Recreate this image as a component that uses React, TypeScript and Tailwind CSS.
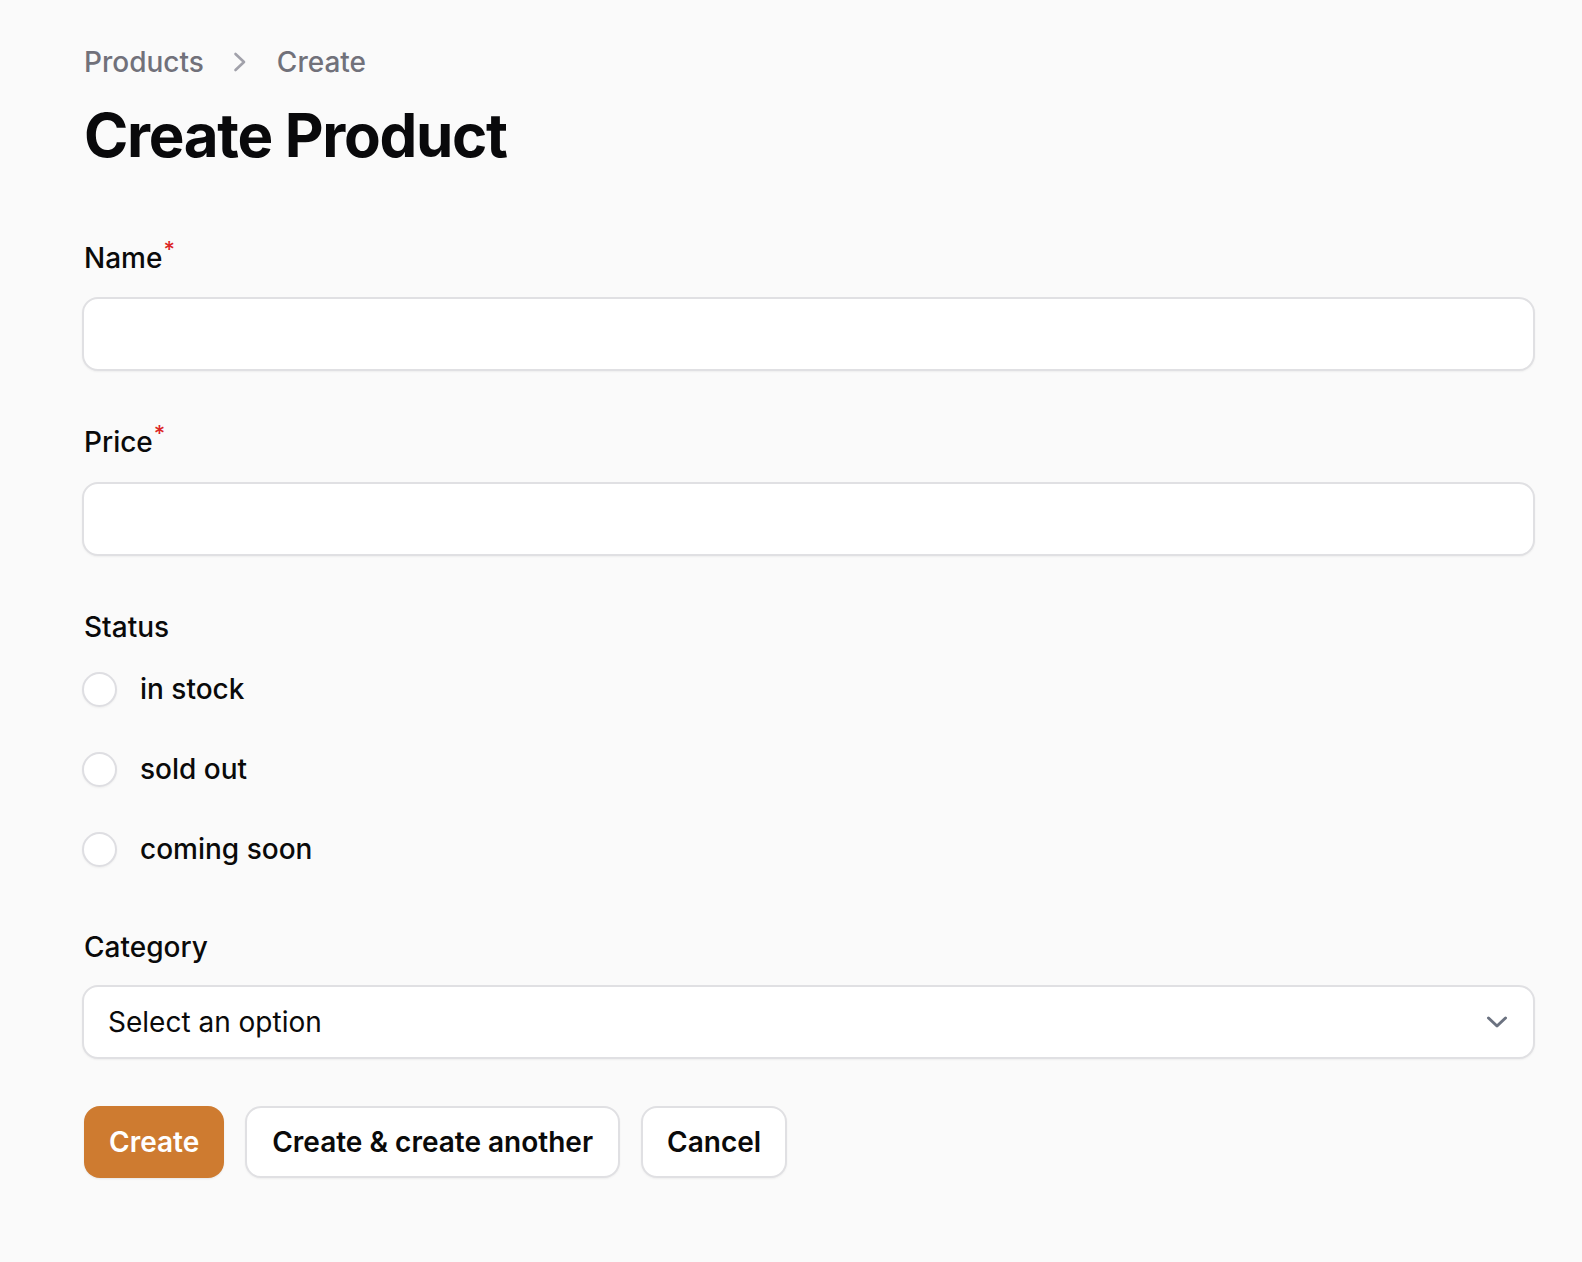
import React from "react";

const font = { fontFamily: "Inter, 'Noto Sans', sans-serif" };

function Label({ text, required }: { text: string; required?: boolean }) {
  return (
    <div className="h-[40px] flex items-center pl-[2px] text-[28px] leading-[40px] font-medium text-[#0a0a0a]">
      <span>
        {text}
        {required && (
          <span className="text-[#dc2626] font-medium text-[22px] leading-none relative top-[-11px] ml-[1px]">*</span>
        )}
      </span>
    </div>
  );
}

function Box({ children }: { children?: React.ReactNode }) {
  return (
    <div className="h-[74px] w-full rounded-[16px] border-2 border-[#e0e0e3] bg-white shadow-[0_1px_2px_rgba(0,0,0,0.05)] flex items-center justify-between pl-[24px] pr-[25px]">
      {children}
    </div>
  );
}

function Radio({ label }: { label: string }) {
  return (
    <div className="h-[48px] flex items-center">
      <div className="w-[35px] h-[35px] rounded-full border-2 border-[#dedee2] bg-white shadow-[0_1px_2px_rgba(0,0,0,0.05)]" />
      <span className="ml-[23px] text-[28px] leading-[40px] font-medium text-[#0a0a0a]">{label}</span>
    </div>
  );
}

export default function App() {
  return (
    <div className="min-h-screen w-full bg-[#fafafa]" style={font}>
      <div className="pl-[82px] pr-[47px] pt-[42px] pb-[60px]">
        <nav className="flex items-center h-[40px] pl-[2px] text-[28px] leading-[40px] font-medium text-[#71717a]">
          <span>Products</span>
          <svg className="ml-[29px] mr-[29px]" width="15" height="22" viewBox="0 0 15 22" fill="none">
            <path d="M2.5 3 L11 11 L2.5 19" stroke="#a1a1aa" strokeWidth="2.6" strokeLinecap="round" strokeLinejoin="round" />
          </svg>
          <span>Create</span>
        </nav>
        <h1 className="mt-[17px] pl-[2px] text-[60px] leading-[72px] font-bold tracking-[-1.3px] text-[#09090b]">
          Create Product
        </h1>

        <div className="mt-[67px]">
          <Label text="Name" required />
        </div>
        <div className="mt-[19px]">
          <Box />
        </div>

        <div className="mt-[51px]">
          <Label text="Price" required />
        </div>
        <div className="mt-[20px]">
          <Box />
        </div>

        <div className="mt-[51px]">
          <Label text="Status" />
        </div>
        <div className="mt-[18px] flex flex-col gap-[32px]">
          <Radio label="in stock" />
          <Radio label="sold out" />
          <Radio label="coming soon" />
        </div>

        <div className="mt-[54px]">
          <Label text="Category" />
        </div>
        <div className="mt-[18px]">
          <Box>
            <span className="text-[28px] leading-[40px] text-[#0a0a0a]">Select an option</span>
            <svg width="22" height="14" viewBox="0 0 22 14" fill="none">
              <path d="M2.5 3 L11 11 L19.5 3" stroke="#6b7280" strokeWidth="3" strokeLinecap="round" strokeLinejoin="round" />
            </svg>
          </Box>
        </div>

        <div className="mt-[47px] flex items-center gap-[21px] pl-[2px]">
          <button className="h-[72px] px-[25px] rounded-[16px] bg-[#ce7b30] text-white text-[28px] leading-[40px] font-semibold shadow-[0_1px_2px_rgba(0,0,0,0.08)]">
            Create
          </button>
          <button className="h-[72px] px-[25px] rounded-[16px] bg-white border-2 border-[#e0e0e3] text-[#0a0a0a] text-[28px] leading-[40px] font-semibold shadow-[0_1px_2px_rgba(0,0,0,0.05)]">
            Create &amp; create another
          </button>
          <button className="h-[72px] px-[24px] rounded-[16px] bg-white border-2 border-[#e0e0e3] text-[#0a0a0a] text-[28px] leading-[40px] font-semibold shadow-[0_1px_2px_rgba(0,0,0,0.05)]">
            Cancel
          </button>
        </div>
      </div>
    </div>
  );
}
